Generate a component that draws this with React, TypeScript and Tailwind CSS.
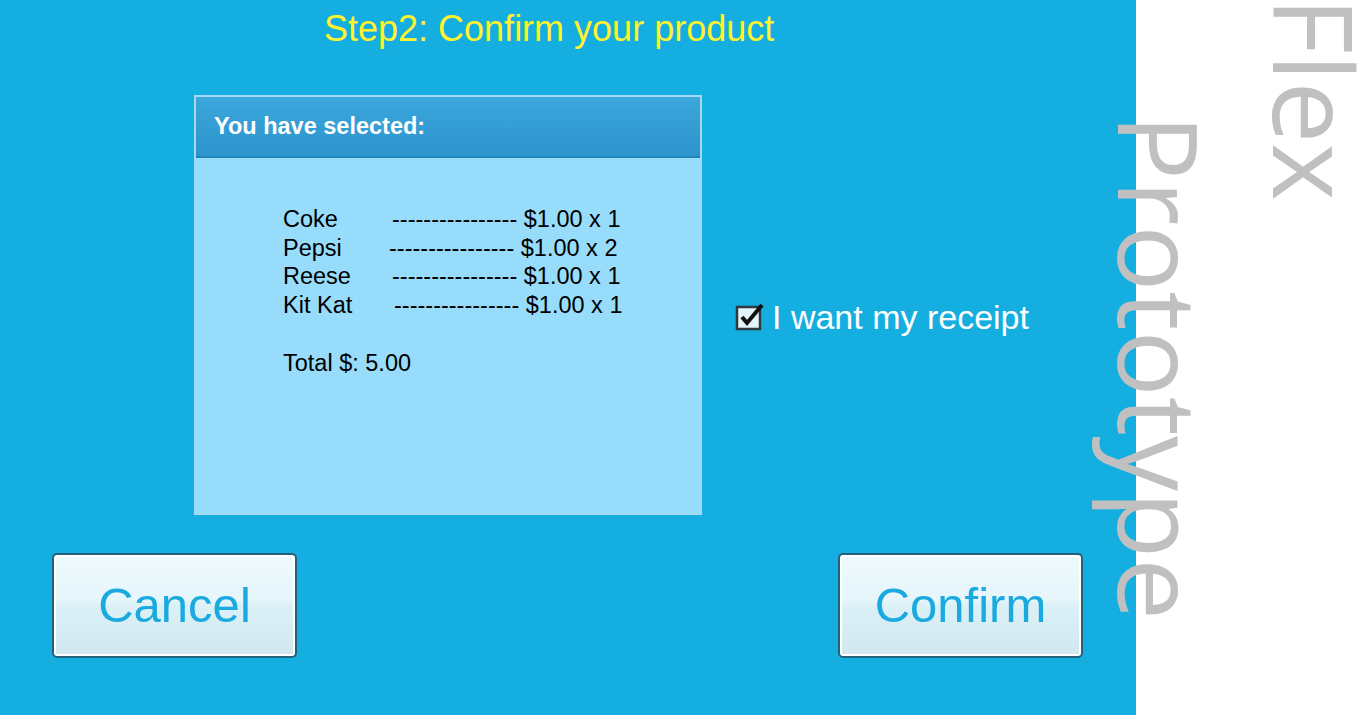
import React from "react";

const items = [
  { name: "Coke", nameCls: "w-[109px]", qty: 1 },
  { name: "Pepsi", nameCls: "w-[106px]", qty: 2 },
  { name: "Reese", nameCls: "w-[109px]", qty: 1 },
  { name: "Kit Kat", nameCls: "w-[111px]", qty: 1 },
];

const DASHES = "----------------";

function BigButton({ label }: { label: string }) {
  return (
    <button className="flex h-[105px] w-[245px] items-center justify-center rounded-[5px] border-2 border-[#24627a] bg-[linear-gradient(to_bottom,#eef9fd_0%,#e6f6fb_44%,#dcf0f7_50%,#d2e8ee_100%)] text-[49px] leading-none text-[#1aaadf] shadow-[inset_0_0_0_2px_#ffffff]">
      {label}
    </button>
  );
}

function CheckIcon() {
  return (
    <svg width="30" height="30" viewBox="0 0 30 30" className="shrink-0">
      <rect x="2" y="5" width="23" height="22" fill="#e4f4fb" stroke="#2e3a40" strokeWidth="2.5" />
      <path d="M7 15 L12 21 L27 3" fill="none" stroke="#111" strokeWidth="4" strokeLinejoin="miter" />
    </svg>
  );
}

export default function App() {
  return (
    <div className="relative flex h-[715px] w-[1358px] overflow-hidden font-['Liberation_Sans',Arial,sans-serif]">
      <main className="flex w-[1136px] shrink-0 flex-col bg-[#15aee0]">
        <h1 className="pl-[324px] pt-[9px] text-[36px] leading-[40px] text-[#fff22e]">
          Step2: Confirm your product
        </h1>

        <div className="mt-[46px] flex items-start">
          <section className="ml-[194px] flex h-[420px] w-[508px] flex-col border-2 border-[#a2dbf3] bg-[#97dcfb]">
            <div className="flex h-[61px] items-center border-b-2 border-[#1d86bf] bg-[linear-gradient(to_bottom,#3ba7dc,#2d94cc)] pl-[18px] text-[23.5px] font-bold text-white">
              You have selected:
            </div>
            <div className="pl-[87px] pt-[47px] text-[23.5px] leading-[28.7px] text-black">
              {items.map((it) => (
                <div key={it.name} className="flex whitespace-pre">
                  <span className={it.nameCls}>{it.name}</span>
                  <span>
                    {DASHES} $1.00 x {it.qty}
                  </span>
                </div>
              ))}
              <div className="mt-[28.7px]">Total $: 5.00</div>
            </div>
          </section>

          <label className="ml-[33px] mt-[203px] flex items-center gap-[7px] text-[34px] leading-[38px] text-white">
            <CheckIcon />
            I want my receipt
          </label>
        </div>

        <div className="mt-[38px] flex justify-between pl-[52px] pr-[53px]">
          <BigButton label="Cancel" />
          <BigButton label="Confirm" />
        </div>
      </main>

      <aside className="flex-1 bg-white" />

      {/* watermark */}
      <div className="pointer-events-none absolute left-[1106px] top-[114px] font-['Open_Sans',sans-serif] text-[110px] font-normal leading-[110px] text-[#c0c0c0] [writing-mode:vertical-rl]">
        Prototype
      </div>
      <div className="pointer-events-none absolute left-[1276px] top-[-3px] font-['Open_Sans',sans-serif] text-[110px] font-normal leading-[80px] text-[#c0c0c0] [writing-mode:vertical-rl]">
        Flex
      </div>
    </div>
  );
}
